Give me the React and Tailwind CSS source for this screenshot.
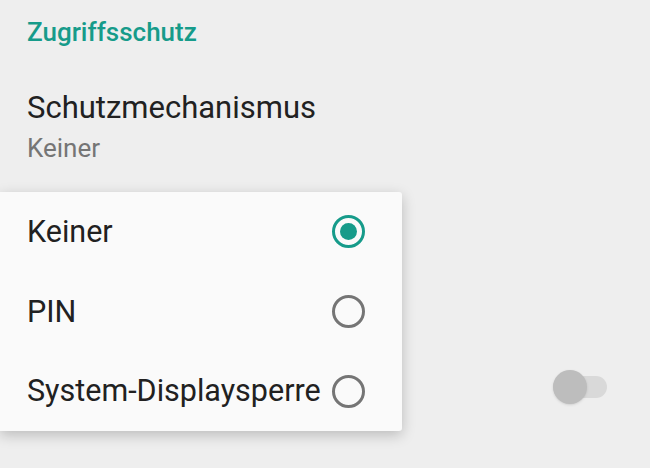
import React, { useState } from 'react';

const options = ['Keiner', 'PIN', 'System-Displaysperre'];

function Radio({ checked }) {
  return (
    <span
      className={`w-[33px] h-[33px] rounded-full border-[3px] flex items-center justify-center shrink-0 ${
        checked ? 'border-[#169b8a]' : 'border-[#757575]'
      }`}
    >
      {checked && <span className="w-[17px] h-[17px] rounded-full bg-[#169b8a]" />}
    </span>
  );
}

export default function App() {
  const [selected, setSelected] = useState(0);

  return (
    <div className="relative w-[650px] h-[468px] bg-[#eeeeee] overflow-hidden" style={{ fontFamily: 'Roboto, "Noto Sans", sans-serif' }}>
      {/* settings list behind the dialog */}
      <div className="pl-[27px] pt-[17px]">
        <div className="text-[26px] font-medium text-[#169b8a] leading-[30px]">Zugriffsschutz</div>
        <div className="mt-[45px] text-[31px] text-[#212121] leading-[32px]">Schutzmechanismus</div>
        <div className="mt-[10px] text-[26px] text-[#757575] leading-[28px]">Keiner</div>
      </div>
      <div className="absolute left-[553px] top-[370px] w-[54px] h-[34px] flex items-center">
        <span className="w-full h-[22px] rounded-full bg-[#d9d9d9]" />
        <span className="absolute left-0 top-0 w-[34px] h-[34px] rounded-full bg-[#bdbdbd] shadow-sm" />
      </div>

      {/* single choice popup */}
      <div className="absolute left-0 top-[192px] w-[402px] h-[239px] bg-[#fafafa] rounded-r-[3px] shadow-[0_4px_14px_rgba(0,0,0,0.22)] flex flex-col">
        {options.map((opt, i) => (
          <button
            key={opt}
            onClick={() => setSelected(i)}
            className="h-[80px] flex items-center justify-between pl-[27px] pr-[37px] text-left"
          >
            <span className="text-[30.5px] text-[#212121] leading-[32px] whitespace-nowrap">{opt}</span>
            <Radio checked={selected === i} />
          </button>
        ))}
      </div>
    </div>
  );
}
